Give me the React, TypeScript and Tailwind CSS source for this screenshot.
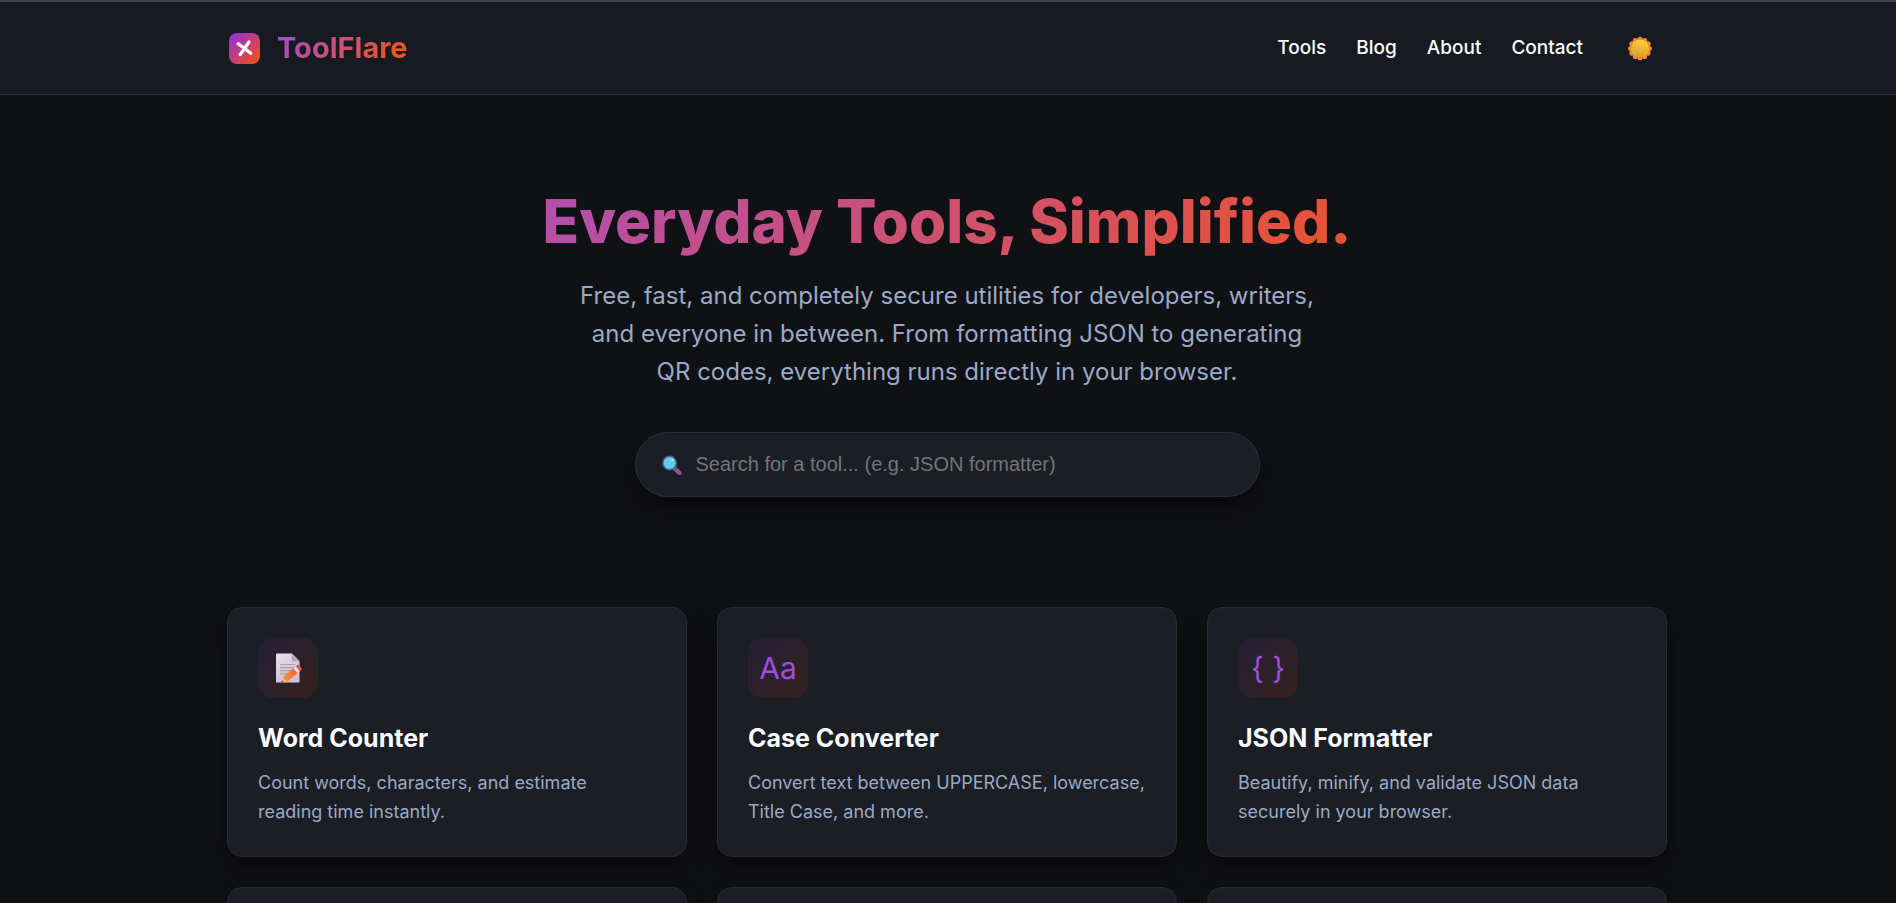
import type { ReactNode } from "react";

const navLinks = ["Tools", "Blog", "About", "Contact"];

function LogoMark() {
  return (
    <svg viewBox="0 0 34 34" className="size-[34px]" aria-hidden="true">
      <defs>
        <linearGradient id="logo-bg" x1="0" y1="0" x2="1" y2="1">
          <stop offset="0" stopColor="#8e2de2" />
          <stop offset="1" stopColor="#fb500c" />
        </linearGradient>
      </defs>
      <rect x="2" y="2" width="31" height="31" rx="8" fill="url(#logo-bg)" />
      <path d="M11.2 12.7 23.8 22.2M22 11 13.2 23.6" stroke="#fff" strokeWidth="3.2" strokeLinecap="round" />
    </svg>
  );
}

function SunIcon() {
  const petals = Array.from({ length: 12 }, (_, i) => {
    const a = (i * Math.PI) / 6;
    return { x: 12 + Math.sin(a) * 9.2, y: 13.5 - Math.cos(a) * 9.2 };
  });
  return (
    <svg viewBox="0 0 24 26" className="h-[26px] w-6" aria-hidden="true">
      <defs>
        <linearGradient id="sun" x1="0.6" y1="0" x2="0.4" y2="1">
          <stop offset="0" stopColor="#fdd23c" />
          <stop offset="1" stopColor="#d79a2c" />
        </linearGradient>
      </defs>
      {petals.map((p, i) => (
        <circle key={i} cx={p.x} cy={p.y} r="2.6" fill="#f28a35" />
      ))}
      <circle cx="12" cy="13.5" r="9" fill="url(#sun)" />
    </svg>
  );
}

function SearchIcon() {
  return (
    <svg viewBox="0 0 20 20" className="size-5 shrink-0" aria-hidden="true">
      <path d="M13.2 13.9 17.4 18" stroke="#8e5590" strokeWidth="4.2" strokeLinecap="round" />
      <path d="M11.6 12.3 13.4 14.1" stroke="#5b4a78" strokeWidth="2" />
      <circle cx="7.6" cy="8" r="6.7" fill="#5fd0f0" stroke="#5a5c94" strokeWidth="1.5" />
      <circle cx="10.4" cy="4.9" r="1.1" fill="#c3ecfa" />
    </svg>
  );
}

function MemoIcon() {
  return (
    <svg viewBox="0 0 30 30" className="size-[30px]" aria-hidden="true">
      <defs>
        <linearGradient id="paper" x1="0" y1="0" x2="0.4" y2="1">
          <stop offset="0" stopColor="#e6dfea" />
          <stop offset="1" stopColor="#cfc2d6" />
        </linearGradient>
        <linearGradient id="pencil" x1="0" y1="1" x2="1" y2="0">
          <stop offset="0" stopColor="#fb9a3c" />
          <stop offset="1" stopColor="#f2622f" />
        </linearGradient>
      </defs>
      <path d="M4 0.5h15l7.5 7.5v21.5H3V1.5a1 1 0 0 1 1-1z" fill="url(#paper)" />
      <path d="M18.6 0.5 26.5 8.4h-6.4a1.5 1.5 0 0 1-1.5-1.5z" fill="#b3a9bc" />
      <path d="M7 11.5h15M7 14.6h15M7 17.7h13M7 20.9h9" stroke="#a89fb2" strokeWidth="1.2" />
      <path d="M8.4 29.5 10 23.8l4.2 5.1z" fill="#e9b39a" />
      <path d="M8.4 29.5 9 27.3l1.6 2z" fill="#5c3a3a" />
      <path d="M9.8 24 20.3 15.2 24.6 20 14 28.9z" fill="url(#pencil)" />
      <path d="m20.3 15.2 2.3-1.9 4.2 4.9-2.2 1.8z" fill="#e3dcf2" />
      <path d="m22.6 13.3 1.7-1.3q1-.7 1.8.2l2.4 2.9q.8.9-.2 1.7l-1.5 1.4z" fill="#f5534f" />
    </svg>
  );
}

const tools: { title: string; description: string; icon: ReactNode }[] = [
  {
    title: "Word Counter",
    description: "Count words, characters, and estimate reading time instantly.",
    icon: <MemoIcon />,
  },
  {
    title: "Case Converter",
    description: "Convert text between UPPERCASE, lowercase, Title Case, and more.",
    icon: "Aa",
  },
  {
    title: "JSON Formatter",
    description: "Beautify, minify, and validate JSON data securely in your browser.",
    icon: "{ }",
  },
];

const gradientText =
  "bg-[linear-gradient(135deg,#9d4edd,#ff5400)] bg-clip-text text-transparent";

const cardClass =
  "rounded-[15px] border border-[#282b31] bg-[#1b1e25] p-[30px] shadow-[0_10px_20px_rgba(0,0,0,0.5)]";

export default function App() {
  return (
    <div className="h-screen overflow-hidden bg-[#101114] font-['Inter',sans-serif] text-[#f8fafc]">
      <header className="border-t-2 border-b border-t-[#3c3d4e] border-b-[#2c3039] bg-[#171a21] pr-[2px]">
        <div className="mx-auto flex h-[92px] max-w-[1440px] items-center justify-between">
          <a href="#" className="flex items-center gap-4">
            <LogoMark />
            <span className={`text-[29px] font-bold ${gradientText}`}>ToolFlare</span>
          </a>
          <nav className="flex items-center gap-[30px] text-[19px] font-medium">
            {navLinks.map((label) => (
              <a key={label} href="#">
                {label}
              </a>
            ))}
            <button type="button" aria-label="Toggle theme" className="flex px-[15px] py-2">
              <SunIcon />
            </button>
          </nav>
        </div>
      </header>

      <div className="pr-[2px]">
        <main className="mx-auto max-w-[1440px]">
          <section className="flex flex-col items-center pt-[90px] pb-[110px] text-center">
            <h1 className={`w-full text-[60px] leading-[72px] font-extrabold ${gradientText}`}>
              Everyday Tools, Simplified.
            </h1>
            <p className="mt-5 max-w-[750px] text-[24px] leading-[38px] text-[#9aa9c6]">
              Free, fast, and completely secure utilities for developers, writers, and everyone in between. From
              formatting JSON to generating QR codes, everything runs directly in your browser.
            </p>
            <label className="mt-[41px] flex h-[65px] w-full max-w-[625px] items-center gap-[14px] rounded-full border border-[#2c3039] bg-[#1b1e25] px-[26px] shadow-[0_10px_20px_rgba(0,0,0,0.5)]">
              <SearchIcon />
              <input
                type="search"
                aria-label="Search for a tool"
                placeholder="Search for a tool... (e.g. JSON formatter)"
                className="min-w-0 flex-1 bg-transparent pb-0.5 font-['Liberation_Sans',Arial,sans-serif] text-[20px] outline-none placeholder:text-[#757575]"
              />
            </label>
          </section>

          <section className="grid grid-cols-3 gap-[30px]">
            {tools.map((tool) => (
              <article key={tool.title} className={cardClass}>
                <div className="flex size-[60px] items-center justify-center rounded-[15px] bg-[linear-gradient(135deg,#241e38,#34221c)] text-[30px] text-[#9d4edd]">
                  {tool.icon}
                </div>
                <h2 className="mt-5 text-[25px] leading-10 font-bold">{tool.title}</h2>
                <p className="mt-[10px] text-[18px] leading-[29px] text-[#9aa9c6]">{tool.description}</p>
              </article>
            ))}
            {tools.map((tool) => (
              <div key={tool.title} aria-hidden="true" className={`${cardClass} min-h-[250px]`} />
            ))}
          </section>
        </main>
      </div>
    </div>
  );
}
